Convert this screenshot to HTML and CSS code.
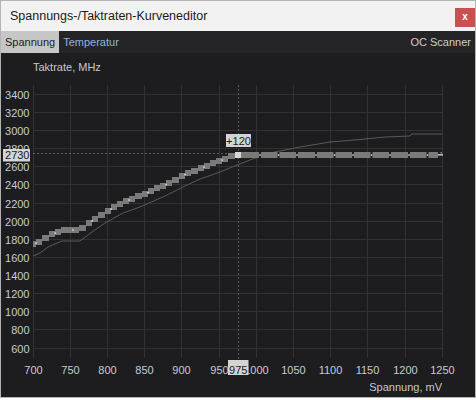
FILE: index.html
```html
<!DOCTYPE html>
<html lang="de">
<head>
<meta charset="utf-8">
<title>Spannungs-/Taktraten-Kurveneditor</title>
<link rel="stylesheet" href="styles.css">
</head>
<body>
<div class="window">
  <div class="titlebar">
    <span class="title">Spannungs-/Taktraten-Kurveneditor</span>
    <span class="close">x</span>
  </div>
  <div class="tabs">
    <span class="tab active">Spannung</span>
    <span class="tab temp">Temperatur</span>
    <span class="tab scanner">OC Scanner</span>
  </div>
  <div class="chart">
    <svg class="plot" width="474" height="344" viewBox="1 53 474 344" xmlns="http://www.w3.org/2000/svg">
      <text class="axis-name" x="33" y="71">Taktrate, MHz</text>
      <path class="grid" d="M33 94.5H442M33 112.5H442M33 130.5H442M33 148.5H442M33 166.5H442M33 184.5H442M33 203.5H442M33 221.5H442M33 239.5H442M33 257.5H442M33 275.5H442M33 293.5H442M33 311.5H442M33 329.5H442M33 348.5H442
        M33.5 85V358M70.5 85V358M107.5 85V358M144.5 85V358M181.5 85V358M219.5 85V358M256.5 85V358M293.5 85V358M330.5 85V358M367.5 85V358M405.5 85V358M442.5 85V358"/>
      <g class="ylabels">
        <text x="29.5" y="98.5">3400</text>
        <text x="29.5" y="116.5">3200</text>
        <text x="29.5" y="134.5">3000</text>
        <text x="29.5" y="152.5">2800</text>
        <text x="29.5" y="170.5">2600</text>
        <text x="29.5" y="188.5">2400</text>
        <text x="29.5" y="207.5">2200</text>
        <text x="29.5" y="225.5">2000</text>
        <text x="29.5" y="243.5">1800</text>
        <text x="29.5" y="261.5">1600</text>
        <text x="29.5" y="279.5">1400</text>
        <text x="29.5" y="297.5">1200</text>
        <text x="29.5" y="315.5">1000</text>
        <text x="29.5" y="333.5">800</text>
        <text x="29.5" y="352.5">600</text>
      </g>
      <g class="xlabels">
        <text x="33.5" y="374">700</text>
        <text x="70.5" y="374">750</text>
        <text x="107.5" y="374">800</text>
        <text x="144.5" y="374">850</text>
        <text x="181.5" y="374">900</text>
        <text x="219.5" y="374">950</text>
        <text x="256.5" y="374">1000</text>
        <text x="293.5" y="374">1050</text>
        <text x="330.5" y="374">1100</text>
        <text x="367.5" y="374">1150</text>
        <text x="405.5" y="374">1200</text>
        <text x="442.5" y="374">1250</text>
      </g>
      <text class="axis-name end" x="442" y="390.5">Spannung, mV</text>

      <path class="dash" d="M33 153.5H234M238.5 85V359"/>

      <polyline class="base" points="33,256 40,253 48,247 62,241 80,241 92,232 105,223 123,213 140,207 165,196 185,186 200,179 220,172 237,165 250,160 270,153 300,147 330,142 360,139.5 385,137 410,136 412,134 442,134"/>

      <g class="blocks">
        <rect x="33" y="241" width="3" height="6"/>
        <rect x="36" y="239" width="6" height="6"/>
        <rect x="42" y="235" width="7" height="6"/>
        <rect x="49" y="231" width="6" height="6"/>
        <rect x="55" y="229" width="6" height="6"/>
        <rect x="61" y="227" width="6" height="6"/>
        <rect x="67" y="227" width="6" height="6"/>
        <rect x="73" y="227" width="6" height="6"/>
        <rect x="79" y="225" width="7" height="6"/>
        <rect x="86" y="220" width="6" height="6"/>
        <rect x="92" y="216" width="6" height="6"/>
        <rect x="98" y="212" width="7" height="6"/>
        <rect x="105" y="208" width="6" height="6"/>
        <rect x="111" y="204" width="6" height="6"/>
        <rect x="117" y="201" width="6" height="6"/>
        <rect x="123" y="198" width="6" height="6"/>
        <rect x="129" y="196" width="6" height="6"/>
        <rect x="135" y="193" width="7" height="6"/>
        <rect x="142" y="191" width="6" height="6"/>
        <rect x="148" y="188" width="6" height="6"/>
        <rect x="154" y="185" width="6" height="6"/>
        <rect x="160" y="183" width="6" height="6"/>
        <rect x="166" y="180" width="6" height="6"/>
        <rect x="172" y="177" width="7" height="6"/>
        <rect x="179" y="173" width="6" height="6"/>
        <rect x="185" y="170" width="6" height="6"/>
        <rect x="191" y="168" width="7" height="6"/>
        <rect x="198" y="165" width="6" height="6"/>
        <rect x="204" y="163" width="6" height="6"/>
        <rect x="210" y="160" width="6" height="6"/>
        <rect x="216" y="158" width="6" height="6"/>
        <rect x="222" y="156" width="6" height="6"/>
        <rect x="228" y="153" width="7" height="6"/>
        <rect x="242" y="152" width="196" height="6"/>
      </g>
      <g class="gaps">
        <rect x="259" y="152" width="2" height="6"/>
        <rect x="277.5" y="152" width="2" height="6"/>
        <rect x="296" y="152" width="2" height="6"/>
        <rect x="315" y="152" width="2" height="6"/>
        <rect x="333.5" y="152" width="2" height="6"/>
        <rect x="352" y="152" width="2" height="6"/>
        <rect x="370.5" y="152" width="2" height="6"/>
        <rect x="389" y="152" width="2" height="6"/>
        <rect x="408" y="152" width="2" height="6"/>
        <rect x="426.5" y="152" width="2" height="6"/>
      </g>
      <g class="dots">
        <rect x="35.3" y="242.3" width="1.5" height="1.5"/>
        <rect x="54.3" y="232.3" width="1.5" height="1.5"/>
        <rect x="72.3" y="229.3" width="1.5" height="1.5"/>
        <rect x="91.3" y="220.3" width="1.5" height="1.5"/>
        <rect x="110.3" y="208.3" width="1.5" height="1.5"/>
        <rect x="128.3" y="199.3" width="1.5" height="1.5"/>
        <rect x="147.3" y="191.8" width="1.5" height="1.5"/>
        <rect x="165.3" y="183.8" width="1.5" height="1.5"/>
        <rect x="184.3" y="173.8" width="1.5" height="1.5"/>
        <rect x="203.3" y="166.3" width="1.5" height="1.5"/>
        <rect x="221.3" y="159.3" width="1.5" height="1.5"/>
        <rect x="259.3" y="154.3" width="1.5" height="1.5"/>
        <rect x="277.8" y="154.3" width="1.5" height="1.5"/>
        <rect x="296.3" y="154.3" width="1.5" height="1.5"/>
        <rect x="315.3" y="154.3" width="1.5" height="1.5"/>
        <rect x="333.8" y="154.3" width="1.5" height="1.5"/>
        <rect x="352.3" y="154.3" width="1.5" height="1.5"/>
        <rect x="370.8" y="154.3" width="1.5" height="1.5"/>
        <rect x="389.3" y="154.3" width="1.5" height="1.5"/>
        <rect x="408.3" y="154.3" width="1.5" height="1.5"/>
        <rect x="426.8" y="154.3" width="1.5" height="1.5"/>
        <rect x="438" y="154.2" width="5" height="1.3"/>
      </g>
      <rect class="endpt" x="440.5" y="152" width="1.5" height="1.5"/>
      <rect class="sel" x="235" y="152" width="6.5" height="6"/>

      <rect class="badge" x="226" y="134" width="25" height="13"/>
      <text class="badge-text mid" x="238.5" y="145">+120</text>
      <rect class="badge" x="3" y="149" width="27" height="12.5"/>
      <text class="badge-text end" x="29.5" y="159">2730</text>
      <rect class="badge" x="228" y="360" width="20.5" height="15"/>
      <text class="badge-text mid" x="238.3" y="373.5">975</text>
    </svg>
  </div>
</div>
</body>
</html>
```
FILE: styles.css
```css
* { box-sizing: border-box; }
html, body { margin: 0; padding: 0; background: #ffffff; }
body { font-family: "Liberation Sans", Arial, sans-serif; }

.window {
  width: 476px;
  height: 398px;
  border: 1px solid #b4b4b4;
  display: flex;
  flex-direction: column;
  background: #1d1d1f;
}

.titlebar {
  height: 30px;
  flex: none;
  background: #f2f2f2;
  display: flex;
  align-items: flex-start;
}
.title {
  margin-left: 9px;
  margin-top: 8px;
  font-size: 12.5px;
  color: #1a1a1a;
}
.close {
  margin-left: auto;
  margin-top: 7px;
  width: 20px;
  height: 19px;
  background: #c75050;
  color: #ffffff;
  font-weight: bold;
  font-size: 10px;
  line-height: 18px;
  text-align: center;
}

.tabs {
  height: 22px;
  flex: none;
  background: #252528;
  display: flex;
  align-items: stretch;
  font-size: 11px;
}
.tab {
  display: flex;
  align-items: center;
  padding: 0 4px;
}
.tab.active {
  background: #c6c6c6;
  color: #1c1c1c;
}
.tab.temp { color: #8fb4dc; padding-left: 4px; }
.tab.scanner { margin-left: auto; color: #cdcdcd; }

.chart {
  flex: 1;
  background: #1d1d1f;
}
.plot { display: block; }

.grid { stroke: #323235; stroke-width: 1; fill: none; shape-rendering: crispEdges; }
.ylabels text { font-family: "Liberation Sans", Arial, sans-serif; font-size: 11px; fill: #c6ccd4; text-anchor: end; }
.xlabels text { font-family: "Liberation Sans", Arial, sans-serif; font-size: 11px; fill: #c6ccd4; text-anchor: middle; }
.axis-name { font-family: "Liberation Sans", Arial, sans-serif; font-size: 11px; fill: #c3c9d2; }
.axis-name.end { text-anchor: end; }

.dash { stroke: #5c5c5f; stroke-width: 1; stroke-dasharray: 2 2; fill: none; shape-rendering: crispEdges; }
.base { stroke: #5a5a5a; stroke-width: 1; fill: none; }
.blocks rect { fill: #7a7a7a; shape-rendering: crispEdges; }
.gaps rect { fill: #1d1d1f; }
.dots rect { fill: #e2e2e2; }
.endpt { fill: #888888; }
.sel { fill: #d8d8d8; }

.badge { fill: #d4d4d4; }
.badge-text { font-family: "Liberation Sans", Arial, sans-serif; font-size: 11px; fill: #1a1a1a; }
.badge-text.mid { text-anchor: middle; }
.badge-text.end { text-anchor: end; }
```
